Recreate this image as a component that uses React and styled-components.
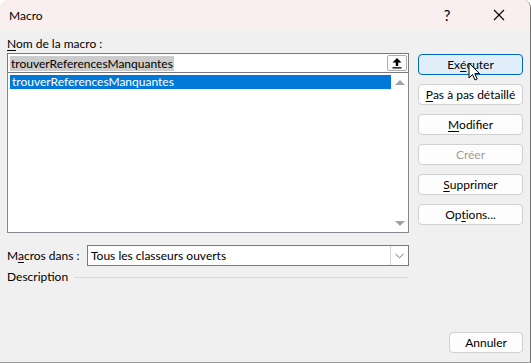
import React from "react";
import styled, { createGlobalStyle } from "styled-components";

const GlobalStyle = createGlobalStyle`
  html, body {
    margin: 0;
    padding: 0;
    background: #ffffff;
  }
  body {
    font-family: Lato, "Noto Sans", sans-serif;
    font-size: 12px;
    color: #000;
  }
`;

const Window = styled.div`
  position: relative;
  width: 530px;
  height: 362px;
  display: flex;
  flex-direction: column;
  background: #f0f0f0;
  border-right: 1px solid #6b6b6b;
  border-bottom: 1px solid #9a9a9a;
  border-top-left-radius: 8px;
  border-top-right-radius: 8px;
  overflow: hidden;
`;

const TitleBar = styled.div`
  height: 30px;
  flex: none;
  display: flex;
  align-items: center;
  background: #f9efef;
  padding-left: 9px;
  font-size: 12px;
`;

const Title = styled.span`
  flex: 1;
  padding-top: 1px;
`;

const TitleButton = styled.div`
  width: 44px;
  height: 30px;
  display: flex;
  align-items: center;
  justify-content: center;
  font-size: 15px;
  margin-right: ${(p) => p.$mr || 0}px;
`;

const Body = styled.div`
  flex: 1;
  display: grid;
  grid-template-columns: 402px 105px;
  column-gap: 9px;
  padding: 6px 8px 9px 7px;
`;

const LeftCol = styled.div`
  display: flex;
  flex-direction: column;
`;

const RightCol = styled.div`
  display: flex;
  flex-direction: column;
  gap: 9px;
  padding-top: 18px;
`;

const Label = styled.div`
  height: 15px;
  line-height: 15px;
  margin-bottom: ${(p) => p.$mb || 0}px;
  white-space: nowrap;
`;

const Key = styled.span`
  text-decoration: underline;
  text-underline-offset: 2px;
`;

const NameInput = styled.div`
  height: 20px;
  box-sizing: border-box;
  border: 1px solid #7a7a7a;
  background: #fff;
  display: flex;
  align-items: center;
  padding-left: 2px;
  padding-right: 1px;
`;

const Selected = styled.span`
  background: #cccccc;
  padding: 0 1px;
  line-height: 15px;
  flex: 0 0 auto;
`;

const Spacer = styled.div`
  flex: 1;
`;

const UpButton = styled.div`
  width: 20px;
  height: 16px;
  box-sizing: border-box;
  border: 1px solid #adadad;
  border-radius: 2px;
  background: #fdfdfd;
  display: flex;
  align-items: center;
  justify-content: center;
`;

const ListBox = styled.div`
  height: 160px;
  box-sizing: border-box;
  border: 1px solid #828790;
  border-top: none;
  background: #fff;
  display: flex;
  padding: 1px 0 1px 1px;
`;

const Rows = styled.div`
  flex: 1;
  padding-left: 1px;
`;

const Row = styled.div`
  height: 14px;
  line-height: 14px;
  padding-left: 2px;
  background: ${(p) => (p.$active ? "#0078d7" : "transparent")};
  color: ${(p) => (p.$active ? "#fff" : "#000")};
  margin-top: 1px;
`;

const ScrollBar = styled.div`
  width: 17px;
  display: flex;
  flex-direction: column;
  justify-content: space-between;
  align-items: center;
  padding: 6px 0 5px;
  background: #fff;
`;

const Arrow = styled.div`
  width: 0;
  height: 0;
  border-left: 5px solid transparent;
  border-right: 5px solid transparent;
  ${(p) =>
    p.$down
      ? "border-top: 5px solid #a3a3a3;"
      : "border-bottom: 5px solid #a3a3a3;"}
`;

const MacrosRow = styled.div`
  display: flex;
  align-items: center;
  margin-top: 12px;
`;

const RowLabel = styled.div`
  width: 80px;
  white-space: nowrap;
`;

const Select = styled.div`
  flex: 1;
  height: 21px;
  box-sizing: border-box;
  border: 1px solid #7a7a7a;
  background: #fff;
  display: flex;
  align-items: center;
  padding-left: 3px;
`;

const SelectText = styled.span`
  flex: 1;
`;

const Chevron = styled.div`
  width: 17px;
  height: 19px;
  border-left: 1px solid #d4d4d4;
  display: flex;
  align-items: center;
  justify-content: center;
`;

const DescRow = styled.div`
  display: flex;
  align-items: center;
  gap: 6px;
  margin-top: 3px;
`;

const Rule = styled.div`
  flex: 1;
  height: 1px;
  background: #d8d8d8;
  margin-top: 2px;
`;

const Button = styled.div`
  position: relative;
  height: 21px;
  box-sizing: border-box;
  border: 1px solid ${(p) => (p.$default ? "#0067c0" : "#d0d0d0")};
  border-radius: 4px;
  background: ${(p) => (p.$default ? "#e0eef9" : "#fdfdfd")};
  color: ${(p) => (p.$disabled ? "#9d9d9d" : "#000")};
  display: flex;
  align-items: center;
  justify-content: center;
  white-space: nowrap;
  margin-top: ${(p) => p.$mt || 0};
  width: ${(p) => p.$w || "auto"};
  align-self: ${(p) => (p.$w ? "flex-end" : "stretch")};
`;

const Cursor = styled.svg`
  position: absolute;
  left: 468px;
  top: 62px;
`;

const UpIcon = () => (
  <svg width="12" height="12" viewBox="0 0 12 12">
    <path d="M6 1 L10.5 5.5 L7.2 5.5 L7.2 9 L4.8 9 L4.8 5.5 L1.5 5.5 Z" fill="#000" />
    <rect x="1.5" y="10.2" width="9" height="1.3" fill="#000" />
  </svg>
);

const ChevronIcon = () => (
  <svg width="9" height="6" viewBox="0 0 9 6">
    <path d="M0.5 0.8 L4.5 4.8 L8.5 0.8" fill="none" stroke="#6e6e6e" strokeWidth="1" />
  </svg>
);

const App = () => {
  return (
    <>
      <GlobalStyle />
      <Window>
        <TitleBar>
          <Title>Macro</Title>
          <TitleButton $mr={8}>?</TitleButton>
          <TitleButton $mr={9}>
            <svg width="12" height="12" viewBox="0 0 12 12">
              <path d="M1 1 L11 11 M11 1 L1 11" stroke="#000" strokeWidth="1.1" />
            </svg>
          </TitleButton>
        </TitleBar>
        <Body>
          <LeftCol>
            <Label $mb={2}>
              <Key>N</Key>om de la macro :
            </Label>
            <NameInput>
              <Selected>trouverReferencesManquantes</Selected>
              <Spacer />
              <UpButton>
                <UpIcon />
              </UpButton>
            </NameInput>
            <ListBox>
              <Rows>
                <Row $active>trouverReferencesManquantes</Row>
              </Rows>
              <ScrollBar>
                <Arrow />
                <Arrow $down />
              </ScrollBar>
            </ListBox>
            <MacrosRow>
              <RowLabel>
                M<Key>a</Key>cros dans :
              </RowLabel>
              <Select>
                <SelectText>Tous les classeurs ouverts</SelectText>
                <Chevron>
                  <ChevronIcon />
                </Chevron>
              </Select>
            </MacrosRow>
            <DescRow>
              <Label>Description</Label>
              <Rule />
            </DescRow>
          </LeftCol>
          <RightCol>
            <Button $default>
              Ex<Key>é</Key>cuter
            </Button>
            <Button>
              <Key>P</Key>as à pas détaillé
            </Button>
            <Button>
              <Key>M</Key>odifier
            </Button>
            <Button $disabled>Créer</Button>
            <Button>
              <Key>S</Key>upprimer
            </Button>
            <Button>
              Op<Key>t</Key>ions...
            </Button>
            <Button $mt="auto" $w="74px">
              Annuler
            </Button>
          </RightCol>
        </Body>
        <Cursor width="13" height="20" viewBox="0 0 13 20">
          <path
            d="M1 1 L1 16 L4.5 12.5 L7 18 L9.2 17 L6.8 11.6 L11.5 11.6 Z"
            fill="#fff"
            stroke="#000"
            strokeWidth="1"
            strokeLinejoin="round"
          />
        </Cursor>
      </Window>
    </>
  );
};

export default App;
